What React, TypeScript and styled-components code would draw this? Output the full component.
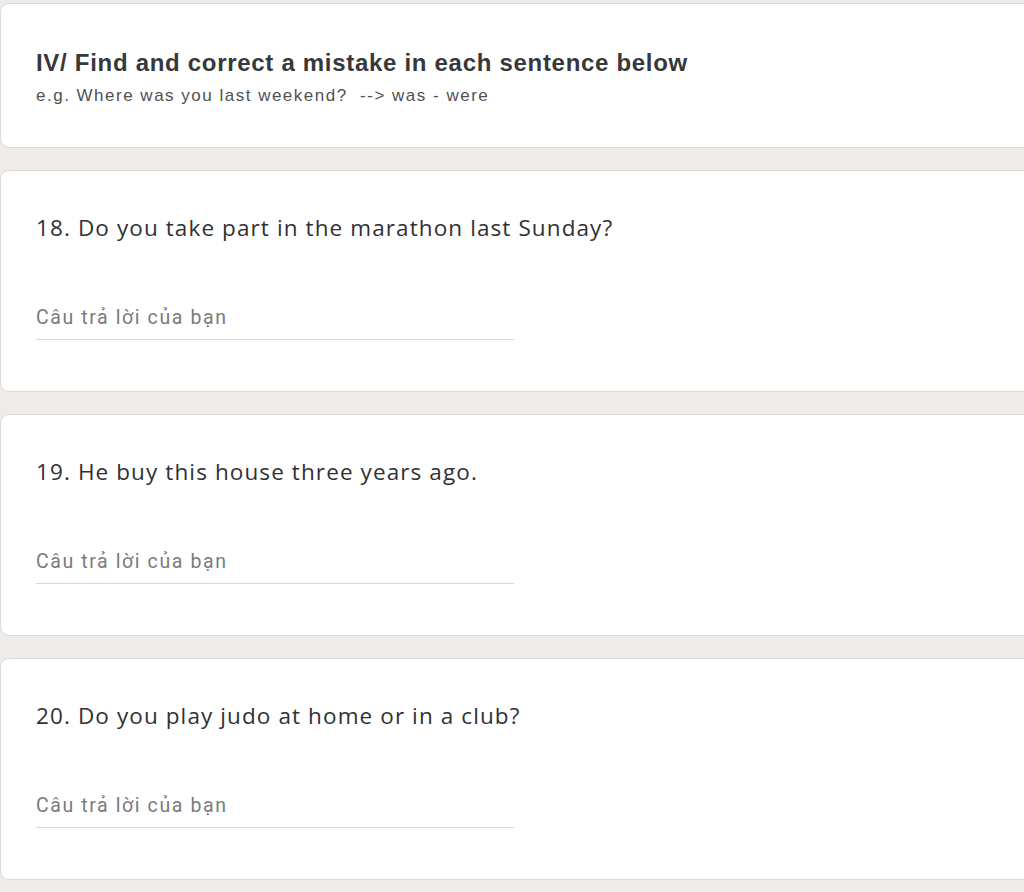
import React from "react";
import styled, { createGlobalStyle } from "styled-components";

const Global = createGlobalStyle`
  html, body { margin: 0; padding: 0; background: #efebe8; overflow: hidden; }
  body { width: 1024px; height: 892px; }
`;

const Page = styled.div`
  display: flex;
  flex-direction: column;
  gap: 22px;
  padding-top: 3px;
  width: 1044px;
  height: 892px;
  box-sizing: border-box;
  background: #efebe8;
  font-family: "Open Sans", Roboto, sans-serif;
`;

const Card = styled.div<{ $h: number }>`
  display: flex;
  flex-direction: column;
  box-sizing: border-box;
  height: ${(p) => p.$h}px;
  background: #fff;
  border: 1px solid #dcdad8;
  border-radius: 9px;
  padding: 0 0 0 35px;
  flex-shrink: 0;
`;

const Title = styled.div`
  margin-top: 44px;
  font-family: "Liberation Sans", Arial, sans-serif;
  font-weight: 700;
  font-size: 24px;
  line-height: 30px;
  color: #38383a;
  letter-spacing: 0.7px;
`;

const Sub = styled.div`
  margin-top: 8px;
  font-family: "Liberation Sans", Arial, sans-serif;
  font-size: 17px;
  line-height: 20px;
  color: #515153;
  letter-spacing: 1.5px;
  white-space: pre;
`;

const Question = styled.div`
  margin-top: 42px;
  font-family: "Open Sans", sans-serif;
  font-size: 22.5px;
  line-height: 30px;
  color: #303134;
  letter-spacing: 1.1px;
`;

const Answer = styled.div`
  margin-top: 63px;
  width: 478px;
  border-bottom: 1px solid #d8d8d8;
  padding-bottom: 9px;
  font-family: Roboto, sans-serif;
  font-size: 19.5px;
  line-height: 24px;
  color: #7a7b7e;
  letter-spacing: 1.6px;
`;

const questions = [
  "18. Do you take part in the marathon last Sunday?",
  "19. He buy this house three years ago.",
  "20. Do you play judo at home or in a club?",
];

export default function App() {
  return (
    <>
      <Global />
      <Page>
        <Card $h={145}>
          <Title>IV/ Find and correct a mistake in each sentence below</Title>
          <Sub>{"e.g. Where was you last weekend?  --> was - were"}</Sub>
        </Card>
        {questions.map((q) => (
          <Card $h={222} key={q}>
            <Question>{q}</Question>
            <Answer>Câu trả lời của bạn</Answer>
          </Card>
        ))}
      </Page>
    </>
  );
}
